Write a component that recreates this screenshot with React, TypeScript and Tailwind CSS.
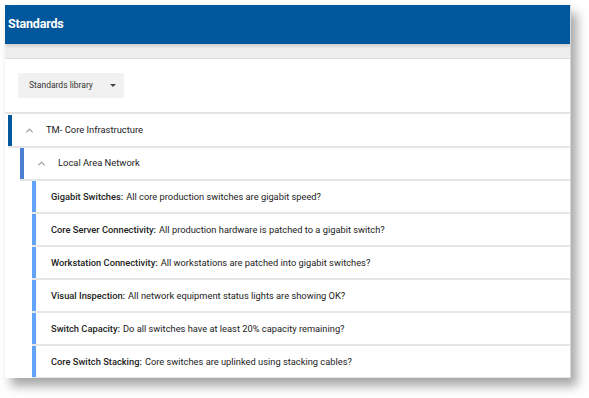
import { ChevronUp } from "lucide-react";

const items = [
  { label: "Gigabit Switches:", text: "All core production switches are gigabit speed?" },
  { label: "Core Server Connectivity:", text: "All production hardware is patched to a gigabit switch?" },
  { label: "Workstation Connectivity:", text: "All workstations are patched into gigabit switches?" },
  { label: "Visual Inspection:", text: "All network equipment status lights are showing OK?" },
  { label: "Switch Capacity:", text: "Do all switches have at least 20% capacity remaining?" },
  { label: "Core Switch Stacking:", text: "Core switches are uplinked using stacking cables?" },
  { label: "", text: "" },
];

export default function App() {
  return (
    <div
      className="w-[589px] h-[398px] bg-white overflow-hidden pt-[5px] pl-[5px]"
      style={{ fontFamily: "Roboto, 'Liberation Sans', sans-serif" }}
    >
      <div className="w-[566px] h-[373px] bg-white overflow-hidden border-r border-[#d8d8d8] shadow-[6px_8px_10px_rgba(0,0,0,0.35)]">
        {/* header bar */}
        <div className="h-[39px] bg-[#01579b] flex items-center pl-[3px] relative z-10 shadow-[0_2px_3px_rgba(0,0,0,0.15)]">
          <span className="text-white font-bold text-[12.5px] tracking-[-0.2px]">Standards</span>
        </div>
        <div className="h-[15px] bg-[#eeeeee] border-b border-[#dedede]" />

        {/* filter */}
        <div className="h-[54px] flex items-center pl-[13px] border-b border-[#e2e2e2]">
          <button className="h-[25px] w-[106px] bg-[#f1f1f1] rounded-[2px] flex items-center pl-[11px] text-[8.5px] text-[#333]">
            <span>Standards library</span>
            <span className="ml-[17px] w-0 h-0 border-l-[3px] border-r-[3px] border-t-[3px] border-l-transparent border-r-transparent border-t-[#444]" />
          </button>
        </div>

        <div className="pt-[1px] border-t border-[#e6e6e6]">
          {/* level 1 */}
          <div className="ml-[3px] h-[33px] flex border-b-2 border-[#e6e6e6]">
            <div className="w-[4px] bg-[#01579b]" />
            <div className="flex items-center pl-[12px]">
              <ChevronUp className="w-[11px] h-[11px] text-[#999]" strokeWidth={2.5} />
              <span className="ml-[11px] text-[9.4px] text-[#222]">TM- Core Infrastructure</span>
            </div>
          </div>
          {/* level 2 */}
          <div className="ml-[15px] h-[33px] flex border-b-2 border-[#e6e6e6]">
            <div className="w-[4px] bg-[#4a80d2]" />
            <div className="flex items-center pl-[12px]">
              <ChevronUp className="w-[11px] h-[11px] text-[#999]" strokeWidth={2.5} />
              <span className="ml-[11px] text-[9.4px] text-[#222]">Local Area Network</span>
            </div>
          </div>
          {/* standards */}
          {items.map((it, i) => (
            <div key={i} className="ml-[27px] h-[33px] flex border-b-2 border-[#e6e6e6]">
              <div className="w-[4px] bg-[#62a2f8]" />
              <div className="flex items-center pl-[15px] text-[9.3px] text-[#222]">
                <span className="font-medium">{it.label}</span>
                <span className="ml-[3px]">{it.text}</span>
              </div>
            </div>
          ))}
        </div>
      </div>
    </div>
  );
}
